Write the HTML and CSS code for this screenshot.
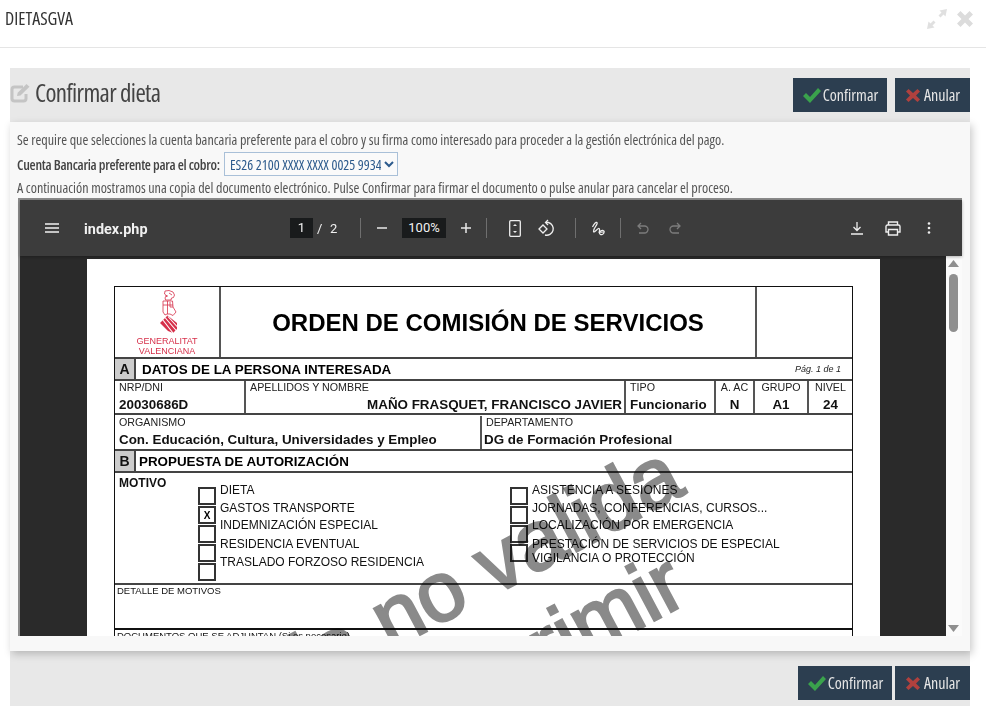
FILE: index.html
```html
<!DOCTYPE html>
<html lang="es">
<head>
<meta charset="utf-8">
<title>DIETASGVA</title>
<link rel="stylesheet" href="styles.css">
</head>
<body>
<header class="topbar">
  <span class="app-name">DIETASGVA</span>
  <div class="win-icons">
    <svg width="20" height="20" viewBox="0 0 20 20"><path d="M20 0l-7.500 1.500 2 2-3 3 2 2 3-3 2 2zM0 20l1.500-7.500 2 2 3-3 2 2-3 3 2 2z" fill="#e0e0e0"/></svg>
    <svg width="16" height="16" viewBox="0 0 16 16"><path d="M0 3.500L3.500 0 8 4.500 12.500 0 16 3.500 11.500 8 16 12.500 12.500 16 8 11.500 3.500 16 0 12.500 4.500 8z" fill="#dcdcdc"/></svg>
  </div>
</header>
<main class="panel">
  <div class="panel-head">
    <h1 class="panel-title">
      <svg class="edit-icon" width="21" height="20" viewBox="0 0 21 20"><path d="M13 4H4.500A2.500 2.500 0 0 0 2 6.500v9A2.500 2.500 0 0 0 4.500 18h9a2.500 2.500 0 0 0 2.500-2.500V11" fill="none" stroke="#c4c4c4" stroke-width="3"/><path d="M7 13l.7-3.300L16.500 1l3 2.800-9 8.600z" fill="#c4c4c4"/></svg>
      <span>Confirmar dieta</span>
    </h1>
    <div class="actions">
      <button class="btn btn-ok"><svg width="20" height="16" viewBox="0 0 20 16"><path d="M1 9l3-3 4 4 8-9 3 3-11 12z" fill="#3aa24c"/></svg><span>Confirmar</span></button>
      <button class="btn btn-no"><svg width="16" height="15" viewBox="0 0 16 15"><path d="M1 3.500L3.500 1 8 5l4.500-4L15 3.500 11 7.500l4 4L12.500 14 8 10l-4.500 4L1 11.500l4-4z" fill="#b0413e"/></svg><span>Anular</span></button>
    </div>
  </div>
  <section class="card">
    <p class="info">Se require que selecciones la cuenta bancaria preferente para el cobro y su firma como interesado para proceder a la gestión electrónica del pago.</p>
    <div class="account-row">
      <label class="account-label" for="cuenta">Cuenta Bancaria preferente para el cobro:</label>
      <select class="account-select" id="cuenta"><option>ES26 2100 XXXX XXXX 0025 9934</option></select>
    </div>
    <p class="info">A continuación mostramos una copia del documento electrónico. Pulse Confirmar para firmar el documento o pulse anular para cancelar el proceso.</p>
    <div class="viewer">
      <div class="toolbar">
        <svg class="t-menu" width="14" height="10" viewBox="0 0 14 10"><path d="M0 1h14M0 5h14M0 9h14" stroke="#f1f1f1" stroke-width="1.400"/></svg>
        <span class="doc-name">index.php</span>
        <span class="page-box">1</span>
        <span class="page-sep">/</span>
        <span class="page-total">2</span>
        <i class="t-sep t-sep-a"></i>
        <svg class="t-minus" width="10" height="2" viewBox="0 0 10 2"><path d="M0 1h10" stroke="#e8e8e8" stroke-width="1.500"/></svg>
        <span class="zoom-box">100%</span>
        <svg class="t-plus" width="10" height="10" viewBox="0 0 10 10"><path d="M0 5h10M5 0v10" stroke="#e8e8e8" stroke-width="1.500"/></svg>
        <i class="t-sep t-sep-b"></i>
        <svg class="t-fit" width="12" height="17" viewBox="0 0 12 17"><rect x=".7" y=".7" width="10.600" height="15.600" rx="1" fill="none" stroke="#eee" stroke-width="1.300"/><path d="M4 6l2-2 2 2zM4 11l2 2 2-2z" fill="#eee"/></svg>
        <svg class="t-rot" width="18" height="18" viewBox="0 0 18 18"><path d="M1 10l4-4 4 4-4 4z" fill="none" stroke="#eee" stroke-width="1.300"/><path d="M8 3.500h2.500a6 6 0 1 1-3.500 12.500" fill="none" stroke="#eee" stroke-width="1.300"/><path d="M10 1L7.500 3.500 10 6" fill="none" stroke="#eee" stroke-width="1.300"/></svg>
        <i class="t-sep t-sep-c"></i>
        <svg class="t-draw" width="15" height="15" viewBox="0 0 15 15"><path d="M1.500 6C3 3 5 .5 6 1.500 7.500 3.500 2 7 2.500 10.500 3 12.500 6 8 7.500 7.500c1.500-.3 1 2 .8 3.500-.2 2 1.500 3 3 2.500 2-.7 2.700-3.500 1-4-1.500-.4-3 .8-4 1.500 2 .5 3.500.3 5.200-.5" fill="none" stroke="#eee" stroke-width="1.200"/></svg>
        <i class="t-sep t-sep-d"></i>
        <svg class="t-undo" width="12" height="12" viewBox="0 0 12 12"><path d="M4 1L1 4l3 3M1 4h6.500a3.500 3.500 0 0 1 0 7H2" fill="none" stroke="#7c7c7c" stroke-width="1.300"/></svg>
        <svg class="t-redo" width="12" height="12" viewBox="0 0 12 12"><path d="M8 1l3 3-3 3M11 4H4.500a3.500 3.500 0 0 0 0 7H10" fill="none" stroke="#7c7c7c" stroke-width="1.300"/></svg>
        <svg class="t-down" width="12" height="13" viewBox="0 0 12 13"><path d="M6 0v8M2.500 5L6 8.500 9.500 5M0 12h12" fill="none" stroke="#eee" stroke-width="1.300"/></svg>
        <svg class="t-print" width="16" height="15" viewBox="0 0 16 15"><path d="M3.500 4V1h9v3M3.500 11H1V5.500A1.500 1.500 0 0 1 2.500 4h11A1.500 1.500 0 0 1 15 5.500V11h-2.500M3.500 8.500h9V14h-9z" fill="none" stroke="#eee" stroke-width="1.400"/></svg>
        <svg class="t-more" width="4" height="12" viewBox="0 0 4 12"><circle cx="2" cy="1.500" r="1.300" fill="#eee"/><circle cx="2" cy="6" r="1.300" fill="#eee"/><circle cx="2" cy="10.500" r="1.300" fill="#eee"/></svg>
      </div>
      <div class="viewer-body">
        <div class="canvas">
          <article class="page">
            <div class="form">
              <div class="row row-title">
                <div class="cell logo-cell">
                  <svg class="logo-mark" width="18" height="43" viewBox="0 0 18 43"><g fill="none" stroke="#d6304a" stroke-width=".8"><path d="M5 1l4-.5 4 1.500 1.500 3-1 2.500-2 .5-.5 2H5.500L5 7.500 7 6 4.500 4z"/><path d="M3 11h9.500l.5 6 3 5-3 3.500-3-1.500H7l-2 1-2-3z"/><path d="M7.500 11v13M3 15h10M10 12v5h3M5 6h3M9 3l3 2"/></g><path d="M0 33l7.500-7.500L17 33v6l-4 4-5-2z" fill="#d6304a"/><path d="M2.500 29.500L13 43M5 27.500l12 14M8 26.500l9 10" stroke="#fff" stroke-width="1.100"/></svg>
                  <span class="logo-text">GENERALITAT<br>VALENCIANA</span>
                </div>
                <div class="cell title-cell">ORDEN DE COMISIÓN DE SERVICIOS</div>
                <div class="cell title-end"></div>
              </div>
              <div class="row row-section">
                <div class="letter">A</div>
                <div class="section-name">DATOS DE LA PERSONA INTERESADA</div>
                <div class="page-note">Pág. 1 de 1</div>
              </div>
              <div class="row row-data">
                <div class="cell field f-nrp"><span class="cap">NRP/DNI</span><b class="val">20030686D</b></div>
                <div class="cell field f-name"><span class="cap">APELLIDOS Y NOMBRE</span><b class="val val-right">MAÑO FRASQUET, FRANCISCO JAVIER</b></div>
                <div class="cell field f-tipo"><span class="cap">TIPO</span><b class="val">Funcionario</b></div>
                <div class="cell field f-ac"><span class="cap">A. AC</span><b class="val">N</b></div>
                <div class="cell field f-gr"><span class="cap">GRUPO</span><b class="val">A1</b></div>
                <div class="cell field f-ni"><span class="cap">NIVEL</span><b class="val">24</b></div>
              </div>
              <div class="row row-data row-data-b">
                <div class="cell field f-org"><span class="cap">ORGANISMO</span><b class="val">Con. Educación, Cultura, Universidades y Empleo</b></div>
                <div class="cell field f-dep"><span class="cap">DEPARTAMENTO</span><b class="val">DG de Formación Profesional</b></div>
              </div>
              <div class="row row-section">
                <div class="letter">B</div>
                <div class="section-name section-b">PROPUESTA DE AUTORIZACIÓN</div>
              </div>
              <div class="row row-motivo">
                <b class="motivo-title">MOTIVO</b>
                <div class="checks"><i class="check"></i><i class="check check-x">X</i><i class="check"></i><i class="check"></i><i class="check"></i></div>
                <div class="opts">
                  <span class="opt">DIETA</span><span class="opt">GASTOS TRANSPORTE</span><span class="opt opt-up">INDEMNIZACIÓN ESPECIAL</span><span class="opt">RESIDENCIA EVENTUAL</span><span class="opt">TRASLADO FORZOSO RESIDENCIA</span>
                </div>
                <div class="checks checks-r"><i class="check"></i><i class="check"></i><i class="check"></i><i class="check"></i></div>
                <div class="opts opts-r">
                  <span class="opt">ASISTENCIA A SESIONES</span><span class="opt">JORNADAS, CONFERENCIAS, CURSOS...</span><span class="opt opt-up">LOCALIZACIÓN POR EMERGENCIA</span><span class="opt opt-tight">PRESTACIÓN DE SERVICIOS DE ESPECIAL</span><span class="opt">VIGILANCIA O PROTECCIÓN</span>
                </div>
              </div>
              <div class="row row-detail"><span class="small-cap">DETALLE DE MOTIVOS</span></div>
              <div class="row row-docs"><span class="small-cap">DOCUMENTOS QUE SE ADJUNTAN (Si es necesario)</span></div>
            </div>
            <div class="mark mark-a">Copia no valida</div>
            <div class="mark mark-b">para imprimir</div>
          </article>
        </div>
        <div class="scrollbar">
          <svg width="11" height="7" viewBox="0 0 11 7"><path d="M5.500 0L11 7H0z" fill="#8f8f8f"/></svg>
          <i class="thumb"></i>
          <svg class="arrow-down" width="11" height="7" viewBox="0 0 11 7"><path d="M0 0h11L5.500 7z" fill="#8f8f8f"/></svg>
        </div>
      </div>
    </div>
  </section>
  <div class="panel-foot">
    <button class="btn btn-ok"><svg width="20" height="16" viewBox="0 0 20 16"><path d="M1 9l3-3 4 4 8-9 3 3-11 12z" fill="#3aa24c"/></svg><span>Confirmar</span></button>
    <button class="btn btn-no"><svg width="16" height="15" viewBox="0 0 16 15"><path d="M1 3.500L3.500 1 8 5l4.500-4L15 3.500 11 7.500l4 4L12.500 14 8 10l-4.500 4L1 11.500l4-4z" fill="#b0413e"/></svg><span>Anular</span></button>
  </div>
</main>
</body>
</html>
```
FILE: styles.css
```css
* { box-sizing: border-box; }
html, body { margin: 0; padding: 0; background: #fff; }
body { width: 986px; height: 726px; overflow: hidden; font-family: "Open Sans", sans-serif; color: #333; font-stretch: 75%; }

.topbar { height: 48px; border-bottom: 1px solid #e5e5e5; padding: 0 13px 0 5px; display: flex; justify-content: space-between; align-items: center; }
.app-name { font-size: 18px; color: #333; position: relative; top: -6px; }
.win-icons { display: flex; gap: 10px; align-items: center; position: relative; top: -5px; }

.panel { margin: 20px 16px 0 10px; background: #e8e8e8; }
.panel-head { height: 54px; display: flex; justify-content: space-between; padding-top: 10px; }
.panel-title { margin: 0; display: flex; align-items: center; gap: 4px; height: 28px; font-size: 25px; letter-spacing: -.64px; font-weight: 400; color: #444; }
.edit-icon { position: relative; top: 1px; }
.actions { display: flex; gap: 8px; }
.btn { height: 34px; border: 0; background: #2c3e50; color: #e6e6e6; font-family: "Open Sans", sans-serif; font-stretch: 75%; font-size: 16px; padding: 0; display: flex; align-items: center; justify-content: center; gap: 1px; }
.btn-ok { width: 94px; }
.btn-no { width: 75px; gap: 3px; }

.card { height: 529px; background: #f8f8f8; box-shadow: 2px 3px 8px rgba(0, 0, 0, .22); padding: 8px 8px 0; position: relative; }
.info { margin: 0 0 0 -1px; font-size: 14.100px; line-height: 20px; color: #555; }
.account-row { display: flex; align-items: center; gap: 4px; height: 28px; margin-left: -1px; }
.account-label { width: 203px; font-size: 14px; letter-spacing: -.27px; font-weight: 600; color: #444; white-space: nowrap; }
.account-select { width: 174px; height: 24px; font-family: "Open Sans", sans-serif; font-stretch: 75%; font-size: 14px; color: #2c5a8c; background: #fafafa; border: 1px solid #a9c0d8; padding: 0 0 0 1px; border-radius: 0; }

.viewer { height: 438px; width: 944px; border-top: 2px solid #8c8c8c; border-left: 2px solid #8c8c8c; background: #2a2a2a; font-stretch: 100%; }

.toolbar { height: 56px; background: #3c3c3c; position: relative; display: flex; align-items: center; color: #f1f1f1; font-family: Roboto, sans-serif; box-shadow: 0 1px 3px rgba(0,0,0,.3); z-index: 2; }
.t-menu { margin-left: 25px; }
.doc-name { margin-left: 25px; width: 206px; padding-top: 2px; font-weight: 700; font-size: 14.400px; }
.page-box { width: 23px; height: 20px; background: #191b1c; text-align: center; font-size: 13px; line-height: 20px; }
.page-sep { margin-left: 4px; font-size: 13px; width: 10px; }
.page-total { font-size: 13px; margin-left: 3px; width: 30px; }
.t-sep { width: 1px; height: 20px; background: #6f6f6f; display: block; }
.t-minus { margin-left: 16px; }
.zoom-box { margin-left: 15px; width: 44px; height: 20px; background: #191b1c; text-align: center; font-size: 13px; line-height: 20px; }
.t-plus { margin-left: 15px; }
.t-sep-b { margin-left: 15px; }
.t-fit { margin-left: 22px; }
.t-rot { margin-left: 17px; }
.t-sep-c { margin-left: 19px; }
.t-draw { margin-left: 15px; }
.t-sep-d { margin-left: 14px; }
.t-undo { margin-left: 16px; }
.t-redo { margin-left: 20px; }
.t-down { margin-left: 170px; }
.t-print { margin-left: 22px; }
.t-more { margin-left: 26px; }

.viewer-body { height: 380px; display: flex; }
.canvas { width: 926px; height: 380px; overflow: hidden; padding: 3px 0 0 67px; background: #2a2a2a; }
.page { width: 793px; height: 900px; background: #fff; padding: 27px 27px 0; position: relative; overflow: hidden; font-family: "Liberation Sans", Arial, sans-serif; color: #111; }

.scrollbar { width: 16px; height: 380px; background: #fbfbfb; display: flex; flex-direction: column; align-items: center; padding: 4px 1px 0 0; position: relative; }
.thumb { display: block; width: 9px; height: 58px; margin-top: 7px; border-radius: 5px; background: #8f8f8f; }
.arrow-down { margin-top: auto; margin-bottom: 4px; }

.form { width: 739px; border: 1px solid #111; border-bottom: 0; }
.row { display: flex; border-bottom: 2px solid #444; }
.cell { border-right: 2px solid #555; }
.cell:last-child { border-right: 0; }
.row-title { height: 72px; }
.logo-cell { width: 106px; display: flex; flex-direction: column; align-items: center; padding-top: 3px; }
.logo-mark { margin-left: 3px; }
.logo-text { font-size: 9px; line-height: 10px; color: #d6304a; text-align: center; margin-top: 3px; }
.title-cell { width: 536px; font-size: 24px; font-weight: 700; text-align: center; line-height: 72px; color: #000; }
.title-end { flex: 1; }
.row-section { height: 22px; align-items: center; position: relative; }
.letter { width: 21px; height: 20px; background: #ccc; border-right: 2px solid #444; font-weight: 700; font-size: 14px; line-height: 20px; text-align: center; }
.section-name { font-weight: 700; font-size: 13.400px; margin-left: 6px; color: #000; }
.section-b { margin-left: 3px; }
.page-note { margin-left: auto; margin-right: 11px; font-size: 9px; font-style: italic; color: #222; }

.row-data { height: 34px; }
.row-data-b { height: 36px; padding-top: 1px; }
.field { display: flex; flex-direction: column; padding: 0 4px; }
.cap { font-size: 10.700px; line-height: 12px; color: #222; }
.val { font-size: 13.400px; line-height: 20px; margin-top: 2px; color: #111; white-space: nowrap; }
.val-right { text-align: right; margin-right: -2px; }
.f-nrp { width: 131px; }
.f-name { width: 380px; }
.f-tipo { width: 90px; }
.f-ac { width: 39px; text-align: center; padding: 0; }
.f-gr { width: 54px; text-align: center; padding: 0; }
.f-ni { flex: 1; text-align: center; padding: 0; }
.f-org { width: 367px; }
.f-dep { flex: 1; padding-left: 2px; }
.f-dep .cap { margin-left: 2px; }

.row-motivo { height: 112px; padding-top: 3px; }
.motivo-title { width: 83px; padding-left: 4px; font-size: 12px; line-height: 14px; }
.checks { width: 18px; display: flex; flex-direction: column; gap: 1px; padding-top: 11px; margin-right: 4px; }
.check { display: block; width: 18px; height: 18px; border: 2px solid #333; font-style: normal; font-weight: 700; font-size: 10px; line-height: 15px; text-align: center; }
.check-x { color: #000; }
.checks-r { margin-left: 86px; }
.opts { width: 204px; display: flex; flex-direction: column; font-size: 12px; line-height: 18px; color: #111; white-space: nowrap; padding-top: 5px; }
.opts-r { width: auto; }
.opt-up { margin: -1px 0 1px; }
.opt-tight { height: 14px; }
.row-detail { height: 45px; display: block; padding: 0 0 0 2px; line-height: 12px; border-bottom-color: #111; }
.row-detail .small-cap { position: relative; top: -2px; }
.row-docs { height: 20px; padding: 0 0 0 2px; border-bottom: 0; line-height: 12px; }
.small-cap { font-size: 9.500px; line-height: 12px; }

.mark { position: absolute; font-family: "Liberation Sans", Arial, sans-serif; font-size: 84px; line-height: 1; color: #8a8a8a; -webkit-text-stroke: 2.500px #8a8a8a; mix-blend-mode: multiply; white-space: nowrap; transform: rotate(-28deg); transform-origin: 0 100%; }
.mark-a { left: 95px; top: 433px; }
.mark-b { left: 177px; top: 500px; }

.panel-foot { height: 55px; display: flex; justify-content: flex-end; gap: 3px; padding-top: 15px; }
```
